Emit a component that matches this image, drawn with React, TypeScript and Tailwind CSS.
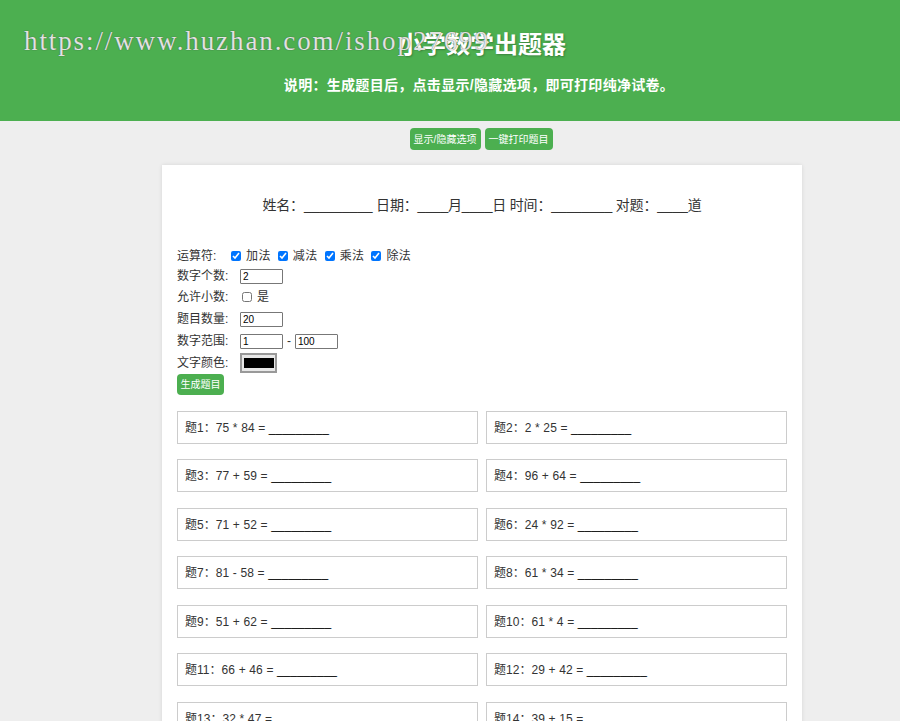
const questions = [
  "75 * 84",
  "2 * 25",
  "77 + 59",
  "96 + 64",
  "71 + 52",
  "24 * 92",
  "81 - 58",
  "61 * 34",
  "51 + 62",
  "61 * 4",
  "66 + 46",
  "29 + 42",
  "32 * 47",
  "39 + 15",
];

const inputClass =
  "w-[43px] h-[15px] border border-[#777] rounded-[1px] px-[2px] text-[10px] leading-none text-black bg-white";

function Row({ label, children }: { label: string; children: React.ReactNode }) {
  return (
    <div className="flex items-center h-[22px]">
      <span className="w-[63px] shrink-0 text-[#333]">{label}</span>
      {children}
    </div>
  );
}

function Check({ text, checked = true }: { text: string; checked?: boolean }) {
  return (
    <label className="flex items-center text-[#333]">
      <input type="checkbox" defaultChecked={checked} className="w-[10px] h-[10px] mr-[5px]" />
      <span className="mr-[7px] tracking-[0.4px]">{text}</span>
    </label>
  );
}

export default function App() {
  return (
    <div className="relative h-screen overflow-hidden bg-[#eeeeee] font-['Liberation_Sans','Noto_Sans_CJK_SC',sans-serif]">
      {/* Header */}
      <header className="h-[121px] bg-[#4caf50] pl-[64px] pt-[30px] text-center text-white">
        <h1 className="text-[24px] leading-[30px] font-bold [text-shadow:1px_1px_2px_rgba(0,0,0,0.25)]">小学数学出题器</h1>
        <p className="mt-[10px] text-[14px] leading-[30px] font-bold tracking-[0.3px] -translate-x-[3px]">说明：生成题目后，点击显示/隐藏选项，即可打印纯净试卷。</p>
      </header>

      {/* Watermark */}
      <div className="absolute left-[24px] top-[26px] font-['Liberation_Serif',serif] text-[27px] leading-[30px] tracking-[1.9px] whitespace-nowrap text-white/85 [text-shadow:0_0_1px_#333]">
        https://www.huzhan.com/ishop27699
      </div>

      {/* Toolbar */}
      <div className="flex justify-center gap-[4px] pl-[62px] pt-[7px]">
        <button className="h-[22px] w-[71px] rounded-[4px] bg-[#4caf50] text-[10px] text-white">显示/隐藏选项</button>
        <button className="h-[22px] w-[68px] rounded-[4px] bg-[#4caf50] text-[10px] text-white">一键打印题目</button>
      </div>

      {/* Paper */}
      <main className="ml-[162px] mt-[15px] w-[640px] bg-white px-[15px] pt-[32px] shadow-[0_0_4px_rgba(0,0,0,0.1)]">
        <p className="text-center text-[14px] leading-[16px] tracking-[-0.18px] text-[#333]">
          姓名：_________ 日期：____月____日 时间：________ 对题：____道
        </p>

        <div className="mt-[33px] text-[12px]">
          <div className="flex items-center h-[20px]">
            <span className="w-[54px] shrink-0 text-[#333]">运算符:</span>
            <Check text="加法" />
            <Check text="减法" />
            <Check text="乘法" />
            <Check text="除法" />
          </div>
          <div className="flex items-center h-[20px]">
            <span className="w-[63px] shrink-0 text-[#333]">数字个数:</span>
            <input className={inputClass} defaultValue="2" />
          </div>
          <div className="flex items-center h-[22px]">
            <span className="w-[65px] shrink-0 text-[#333]">允许小数:</span>
            <Check text="是" checked={false} />
          </div>
          <Row label="题目数量:">
            <input className={inputClass} defaultValue="20" />
          </Row>
          <Row label="数字范围:">
            <input className={inputClass} defaultValue="1" />
            <span className="mx-[4px] text-[#333]">-</span>
            <input className={inputClass} defaultValue="100" />
          </Row>
          <div className="flex items-center h-[21px]">
            <span className="w-[63px] shrink-0 text-[#333]">文字颜色:</span>
            <span className="flex h-[20px] w-[37px] items-center justify-center border-2 border-[#999] bg-[#e8e8e8]">
              <span className="h-[10px] w-[30px] bg-black" />
            </span>
          </div>
          <button className="mt-[1px] block h-[21px] w-[47px] rounded-[4px] bg-[#4caf50] text-[10px] text-white">生成题目</button>
        </div>

        <div className="mt-[15.5px] grid grid-cols-2 gap-x-[8px] gap-y-[15.5px] pb-[20px]">
          {questions.map((q, i) => (
            <div key={i} className="h-[33px] border border-[#cccccc] px-[7px] text-[12px] leading-[33px] text-[#333]">
              题{i + 1}：<span className="tracking-[0.15px]">{q} =</span> <span className="text-black">_________</span>
            </div>
          ))}
        </div>
      </main>
    </div>
  );
}
